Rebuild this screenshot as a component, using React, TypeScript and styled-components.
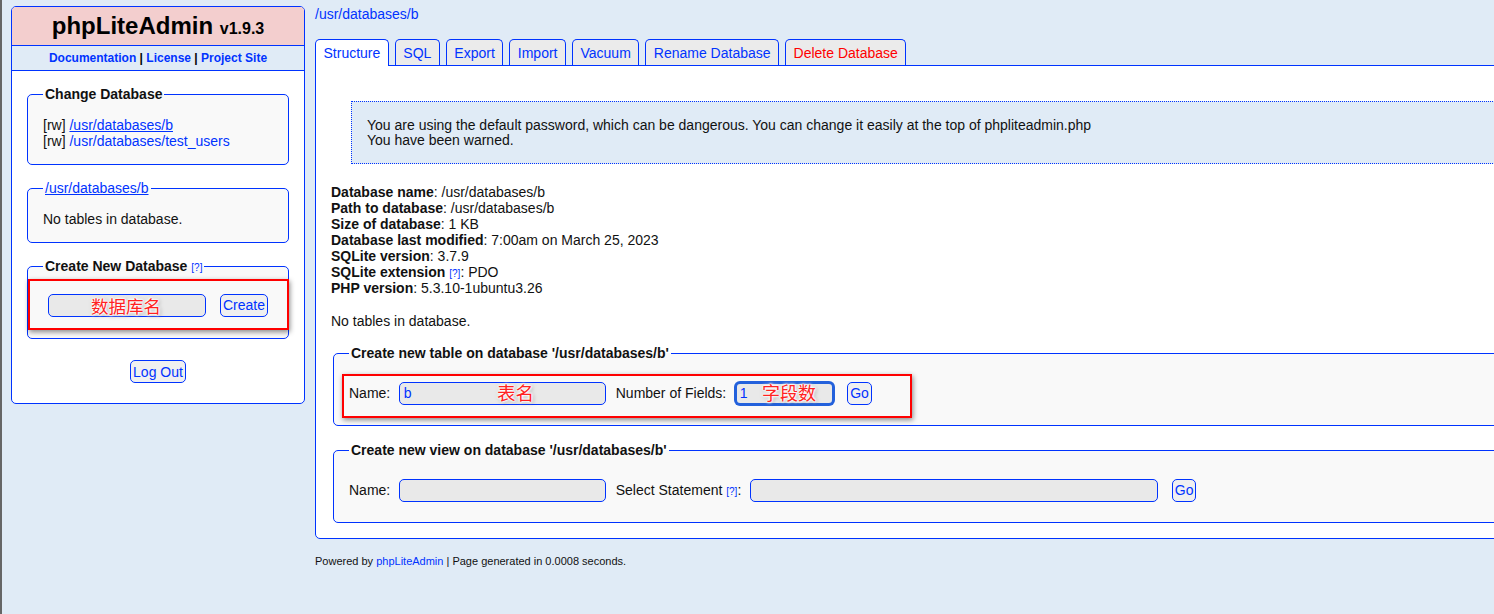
import React from 'react';
import styled, { createGlobalStyle, css } from 'styled-components';

const GlobalStyle = createGlobalStyle`
  html, body { margin: 0; padding: 0; overflow: hidden; }
  body {
    background: linear-gradient(to right, #666 0, #666 2px, #e0ebf6 2px);
    font-family: "Liberation Sans", Arial, sans-serif;
    font-size: 14px;
    color: #111;
  }
  #root { min-height: 614px; }
`;

const Page = styled.div`
  position: relative;
  display: flex;
  align-items: flex-start;
  padding: 6px 0 0 11px;
  width: max-content;
`;

const Sidebar = styled.div`
  width: 294px;
  box-sizing: border-box;
  border: 1px solid #03f;
  border-radius: 5px;
  background: #fff;
  overflow: hidden;
  margin-right: 10px;
`;

const Header = styled.div`
  height: 38px;
  line-height: 38px;
  text-align: center;
  background: #f3cece;
  border-bottom: 1px solid #03f;
  font-weight: bold;
  font-size: 24px;
  color: #000;
`;

const Version = styled.span`
  font-size: 16px;
`;

const LinksRow = styled.div`
  height: 24px;
  line-height: 24px;
  background: #e0ebf6;
  border-bottom: 1px solid #03f;
  font-size: 12px;
  font-weight: bold;
  text-align: center;
  color: #000;
`;

const A = styled.a<{ $u?: boolean; $red?: boolean; $plain?: boolean }>`
  color: ${(p) => (p.$red ? '#f00' : '#03f')};
  text-decoration: ${(p) => (p.$u ? 'underline' : 'none')};
  font-weight: ${(p) => (p.$plain ? 'normal' : 'inherit')};
  cursor: pointer;
`;

const SideBody = styled.div`
  display: flex;
  flex-direction: column;
  gap: 15px;
  padding: 15px 15px 20px;
`;

const Fieldset = styled.fieldset<{ $main?: boolean }>`
  margin: ${(p) => (p.$main ? '0 2px' : '0')};
  padding: 15px;
  border: 1px solid #03f;
  border-radius: 5px;
  background: #f9f9f9;
  min-width: 0;
`;

const Legend = styled.legend`
  padding: 0 2px;
  font-weight: bold;
  font-size: 14px;
  line-height: 16px;
  color: #111;
`;

const Lines = styled.div`
  line-height: 16px;
`;

const Help = styled.a`
  font-size: 10px;
  line-height: 10px;
  font-weight: normal;
  color: #03f;
  text-decoration: none;
`;

const CreateRow = styled.div`
  box-sizing: border-box;
  display: flex;
  justify-content: center;
  align-items: center;
  gap: 14px;
  height: 34px;
  padding-bottom: 2px;
`;

const Input = styled.input<{ $w: number; $focus?: boolean }>`
  box-sizing: border-box;
  width: ${(p) => p.$w}px;
  height: 23px;
  margin: 0;
  padding: 0 4px;
  border: 1px solid #03f;
  border-radius: 5px;
  background: #e9e9e9;
  color: #03f;
  font-family: "Liberation Sans", Arial, sans-serif;
  font-size: 14px;
  outline: none;
  ${(p) =>
    p.$focus &&
    css`
      border: 2px solid #2361dc;
      box-shadow: 0 0 0 1px #2361dc;
      padding: 0 3px;
    `}
`;

const Button = styled.button<{ $ml?: number }>`
  box-sizing: border-box;
  height: 23px;
  margin: 0 0 0 ${(p) => p.$ml ?? 0}px;
  padding: 0 2px;
  border: 1px solid #03f;
  border-radius: 5px;
  background: #f0f0f0;
  color: #03f;
  font-family: "Liberation Sans", Arial, sans-serif;
  font-size: 14px;
  cursor: pointer;
`;

const LogOutWrap = styled.div`
  margin-top: 6px;
  display: flex;
  justify-content: center;
`;

const Main = styled.div`
  width: 1300px;
`;

const Crumb = styled.div`
  line-height: 16px;
  margin-bottom: 17px;
`;

const Tabs = styled.div`
  display: flex;
  align-items: flex-end;
  gap: 6px;
`;

const Tab = styled.a<{ $active?: boolean; $red?: boolean }>`
  box-sizing: border-box;
  height: 26px;
  padding: 5px 7.5px 0;
  line-height: 16px;
  border: 1px solid #03f;
  border-bottom: none;
  border-radius: 5px 5px 0 0;
  background: #ebebeb;
  color: ${(p) => (p.$red ? '#f00' : '#03f')};
  text-decoration: none;
  white-space: nowrap;
  cursor: pointer;
  ${(p) =>
    p.$active &&
    css`
      background: #fff;
      height: 27px;
      margin-bottom: -1px;
      position: relative;
      z-index: 1;
    `}
`;

const Panel = styled.div`
  background: #fff;
  border: 1px solid #03f;
  border-radius: 0 5px 5px 5px;
  padding: 15px;
`;

const Warning = styled.div`
  margin: 20px;
  border: 1px dotted #03f;
  background: #e0ebf6;
  padding: 16px 15px 15px;
  line-height: 15px;
`;

const Info = styled.div`
  line-height: 16px;
`;

const NoTables = styled.div`
  line-height: 16px;
  margin: 17px 0 16px;
`;

const MainForms = styled.div`
  display: flex;
  flex-direction: column;
  gap: 16px;
`;

const FormRow = styled.div`
  display: flex;
  align-items: center;
  height: 34px;
`;

const Lbl = styled.span`
  margin: 0 8.5px 0 10px;
  white-space: nowrap;
  &:first-child {
    margin-left: 0;
  }
`;

const Footer = styled.div`
  margin-top: 16px;
  font-size: 11px;
  line-height: 13px;
`;

const AnnotBox = styled.div<{ $x: number; $y: number; $w: number; $h: number }>`
  position: absolute;
  left: ${(p) => p.$x}px;
  top: ${(p) => p.$y}px;
  width: ${(p) => p.$w}px;
  height: ${(p) => p.$h}px;
  box-sizing: border-box;
  border: 2px solid #f00;
  box-shadow: 1px 2px 5px rgba(0, 0, 0, 0.45);
  pointer-events: none;
`;

const AnnotText = styled.div<{ $x: number; $y: number; $size: number }>`
  position: absolute;
  left: ${(p) => p.$x}px;
  top: ${(p) => p.$y}px;
  font-family: "Noto Sans CJK SC", "Noto Sans", sans-serif;
  font-weight: 400;
  font-size: ${(p) => p.$size}px;
  line-height: 20px;
  color: #f22;
  white-space: nowrap;
  pointer-events: none;
  text-shadow: 0 0 1px #fff, 0 0 2px #fff, 0 0 2px #fff, 0 0 3px #fff, 0 0 3px #fff,
    0 0 4px #fff, 1px 1px 4px rgba(0, 0, 0, 0.55);
`;

const B = styled.b`
  font-weight: bold;
`;

export default function App() {
  return (
    <>
      <GlobalStyle />
      <Page>
        <Sidebar>
          <Header>
            phpLiteAdmin <Version>v1.9.3</Version>
          </Header>
          <LinksRow>
            <A>Documentation</A> | <A>License</A> | <A>Project Site</A>
          </LinksRow>
          <SideBody>
            <Fieldset>
              <Legend>Change Database</Legend>
              <Lines>
                <div>
                  [rw] <A $u>/usr/databases/b</A>
                </div>
                <div>
                  [rw] <A>/usr/databases/test_users</A>
                </div>
              </Lines>
            </Fieldset>
            <Fieldset>
              <Legend>
                <A $u $plain>/usr/databases/b</A>
              </Legend>
              <Lines>No tables in database.</Lines>
            </Fieldset>
            <Fieldset>
              <Legend>
                Create New Database <Help>[?]</Help>
              </Legend>
              <CreateRow>
                <Input $w={158} type="text" defaultValue="" />
                <Button>Create</Button>
              </CreateRow>
            </Fieldset>
            <LogOutWrap>
              <Button>Log Out</Button>
            </LogOutWrap>
          </SideBody>
        </Sidebar>

        <Main>
          <Crumb>
            <A>/usr/databases/b</A>
          </Crumb>
          <Tabs>
            <Tab $active>Structure</Tab>
            <Tab>SQL</Tab>
            <Tab>Export</Tab>
            <Tab>Import</Tab>
            <Tab>Vacuum</Tab>
            <Tab>Rename Database</Tab>
            <Tab $red>Delete Database</Tab>
          </Tabs>
          <Panel>
            <Warning>
              You are using the default password, which can be dangerous. You can change it easily at the top of phpliteadmin.php
              <br />
              You have been warned.
            </Warning>
            <Info>
              <div>
                <B>Database name</B>: /usr/databases/b
              </div>
              <div>
                <B>Path to database</B>: /usr/databases/b
              </div>
              <div>
                <B>Size of database</B>: 1 KB
              </div>
              <div>
                <B>Database last modified</B>: 7:00am on March 25, 2023
              </div>
              <div>
                <B>SQLite version</B>: 3.7.9
              </div>
              <div>
                <B>SQLite extension</B> <Help>[?]</Help>: PDO
              </div>
              <div>
                <B>PHP version</B>: 5.3.10-1ubuntu3.26
              </div>
            </Info>
            <NoTables>No tables in database.</NoTables>
            <MainForms>
              <Fieldset $main>
                <Legend>Create new table on database '/usr/databases/b'</Legend>
                <FormRow>
                  <Lbl>Name:</Lbl>
                  <Input $w={207} type="text" defaultValue="b" />
                  <Lbl>Number of Fields:</Lbl>
                  <Input $w={99} $focus type="text" defaultValue="1" />
                  <Button $ml={13.5}>Go</Button>
                </FormRow>
              </Fieldset>
              <Fieldset $main>
                <Legend>Create new view on database '/usr/databases/b'</Legend>
                <FormRow>
                  <Lbl>Name:</Lbl>
                  <Input $w={207} type="text" defaultValue="" />
                  <Lbl>
                    Select Statement <Help>[?]</Help>:
                  </Lbl>
                  <Input $w={408} type="text" defaultValue="" />
                  <Button $ml={14}>Go</Button>
                </FormRow>
              </Fieldset>
            </MainForms>
          </Panel>
          <Footer>
            Powered by <A>phpLiteAdmin</A> | Page generated in 0.0008 seconds.
          </Footer>
        </Main>

        <AnnotBox $x={28} $y={279} $w={261} $h={51} />
        <AnnotText $x={91} $y={296} $size={17.5}>数据库名</AnnotText>
        <AnnotBox $x={342} $y={374} $w={570} $h={44} />
        <AnnotText $x={497} $y={382} $size={18.5}>表名</AnnotText>
        <AnnotText $x={762} $y={382} $size={18}>字段数</AnnotText>
      </Page>
    </>
  );
}
